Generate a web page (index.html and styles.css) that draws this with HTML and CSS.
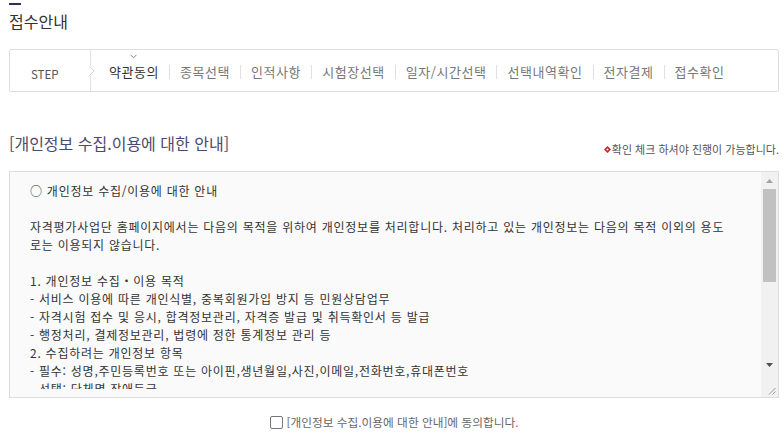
FILE: index.html
```html
<!DOCTYPE html>
<html lang="ko">
<head>
<meta charset="utf-8">
<title>접수안내</title>
<link rel="stylesheet" href="styles.css">
</head>
<body>
<div class="page">
  <div class="topbar"></div>
  <h1 class="title">접수안내</h1>

  <div class="steps">
    <div class="step-label">STEP
      <svg class="step-arrow" width="6" height="10" viewBox="0 0 6 10"><path d="M0.5 0.5 L5 5 L0.5 9.5" fill="none" stroke="#cfcfcf" stroke-width="1"/></svg>
    </div>
    <ul class="step-list">
      <li class="step active">약관동의
        <svg class="caret" width="7" height="5" viewBox="0 0 7 5"><path d="M0.5 0.8 L3.5 3.8 L6.5 0.8" fill="none" stroke="#888" stroke-width="1"/></svg>
      </li>
      <li class="sep"></li>
      <li class="step">종목선택</li>
      <li class="sep"></li>
      <li class="step">인적사항</li>
      <li class="sep"></li>
      <li class="step">시험장선택</li>
      <li class="sep"></li>
      <li class="step">일자/시간선택</li>
      <li class="sep"></li>
      <li class="step">선택내역확인</li>
      <li class="sep"></li>
      <li class="step">전자결제</li>
      <li class="sep"></li>
      <li class="step">접수확인</li>
    </ul>
  </div>

  <div class="section-head">
    <h2 class="section-title">[개인정보 수집.이용에 대한 안내]</h2>
    <p class="notice"><svg class="bullet" width="7" height="7" viewBox="0 0 7 7"><path d="M3.5 0 L7 3.5 L3.5 7 L0 3.5 Z" fill="#c0262d"/><path d="M3.5 2.3 L4.7 3.5 L3.5 4.7 L2.3 3.5 Z" fill="#fff"/></svg>확인 체크 하셔야 진행이 가능합니다.</p>
  </div>

  <div class="textbox">
    <div class="textbox-body">
      <div class="textbox-clip">
        <div class="line">○ 개인정보 수집/이용에 대한 안내</div>
        <div class="line">&nbsp;</div>
        <div class="line">자격평가사업단 홈페이지에서는 다음의 목적을 위하여 개인정보를 처리합니다. 처리하고 있는 개인정보는 다음의 목적 이외의 용도</div>
        <div class="line">로는 이용되지 않습니다.</div>
        <div class="line">&nbsp;</div>
        <div class="line">1. 개인정보 수집・이용 목적</div>
        <div class="line">- 서비스 이용에 따른 개인식별, 중복회원가입 방지 등 민원상담업무</div>
        <div class="line">- 자격시험 접수 및 응시, 합격정보관리, 자격증 발급 및 취득확인서 등 발급</div>
        <div class="line">- 행정처리, 결제정보관리, 법령에 정한 통계정보 관리 등</div>
        <div class="line">2. 수집하려는 개인정보 항목</div>
        <div class="line">- 필수: 성명,주민등록번호 또는 아이핀,생년월일,사진,이메일,전화번호,휴대폰번호</div>
        <div class="line">- 선택: 단체명,장애등급</div>
      </div>
    </div>
    <div class="scrollbar">
      <div class="sb-btn"><svg width="7" height="4" viewBox="0 0 7 4"><path d="M0 4 L3.5 0 L7 4 Z" fill="#a3a3a3"/></svg></div>
      <div class="sb-track"><div class="sb-thumb"></div></div>
      <div class="sb-btn"><svg width="7" height="4" viewBox="0 0 7 4"><path d="M0 0 L3.5 4 L7 0 Z" fill="#505050"/></svg></div>
      <div class="sb-corner"><svg width="8" height="8" viewBox="0 0 8 8"><path d="M7.5 1 L1 7.5 M7.5 4.5 L4.5 7.5" stroke="#999" stroke-width="1"/></svg></div>
    </div>
  </div>

  <label class="agree"><input type="checkbox" class="agree-box"><span>[개인정보 수집.이용에 대한 안내]에 동의합니다.</span></label>
</div>
</body>
</html>
```

FILE: styles.css
```css
html, body {
  margin: 0;
  padding: 0;
  background: #fff;
}
body {
  font-family: "Noto Sans CJK KR", "Noto Sans", sans-serif;
  color: #333;
}
.page {
  padding: 3px 5px 0 9px;
}
.topbar {
  width: 12px;
  height: 2px;
  background: #2d2d5a;
}
.title {
  margin: 6px 0 0;
  font-size: 16px;
  font-weight: normal;
  line-height: 20px;
  color: #333;
}
.steps {
  margin-top: 18px;
  height: 41px;
  border: 1px solid #dedede;
  border-radius: 2px;
  display: flex;
  align-items: stretch;
}
.step-label {
  position: relative;
  width: 59px;
  padding-left: 21px;
  border-right: 1px solid #e2e2e2;
  font-size: 11.5px;
  color: #555;
  display: flex;
  align-items: center;
  padding-top: 6px;
  box-sizing: content-box;
}
.step-arrow {
  position: absolute;
  right: -5px;
  top: 16px;
  background: #fff;
}
.step-list {
  list-style: none;
  margin: 0;
  padding: 0 0 0 18px;
  display: flex;
  align-items: center;
}
.step {
  position: relative;
  font-size: 13px;
  letter-spacing: 0.55px;
  line-height: 18px;
  color: #777;
  padding-top: 2px;
}
.step.active {
  color: #333;
}
.caret {
  position: absolute;
  left: calc(50% - 4px);
  top: -7px;
}
.sep {
  width: 1px;
  height: 14px;
  background: #e0e0e0;
  margin: 2px 10px 0;
}
.section-head {
  margin-top: 41px;
  display: flex;
  justify-content: space-between;
  align-items: flex-end;
}
.section-title {
  margin: 0;
  font-size: 16px;
  font-weight: normal;
  line-height: 20px;
  color: #4a4a6e;
}
.notice {
  margin: 0 0 -3px;
  font-size: 11px;
  line-height: 14px;
  color: #555;
  display: flex;
  align-items: center;
}
.bullet {
  margin-right: 1px;
}
.textbox {
  margin-top: 18px;
  height: 225px;
  border: 1px solid #dcdcdc;
  background: #fafafa;
  display: flex;
}
.textbox-body {
  flex: 1;
  padding: 10px 20px 0 20px;
  overflow: hidden;
}
.textbox-clip {
  height: 207px;
  overflow: hidden;
}
.line {
  font-size: 12px;
  line-height: 18px;
  white-space: nowrap;
  letter-spacing: 0.75px;
  color: #333;
}
.scrollbar {
  width: 17px;
  background: #f1f1f1;
  display: flex;
  flex-direction: column;
}
.sb-btn {
  height: 17px;
  display: flex;
  align-items: center;
  justify-content: center;
}
.sb-track {
  flex: 1;
  padding: 0 2px;
}
.sb-thumb {
  height: 93px;
  background: #c1c1c1;
}
.sb-corner {
  height: 22px;
  display: flex;
  align-items: flex-end;
  justify-content: flex-end;
  padding: 0 2px 2px 0;
}
.agree {
  margin-top: 16px;
  display: flex;
  justify-content: center;
  align-items: center;
  font-size: 11.7px;
  line-height: 16px;
  color: #666;
}
.agree-box {
  appearance: none;
  -webkit-appearance: none;
  width: 13px;
  height: 13px;
  margin: 0 4px 0 0;
  border: 1px solid #767676;
  border-radius: 2px;
  background: #fff;
  box-sizing: border-box;
}
```
